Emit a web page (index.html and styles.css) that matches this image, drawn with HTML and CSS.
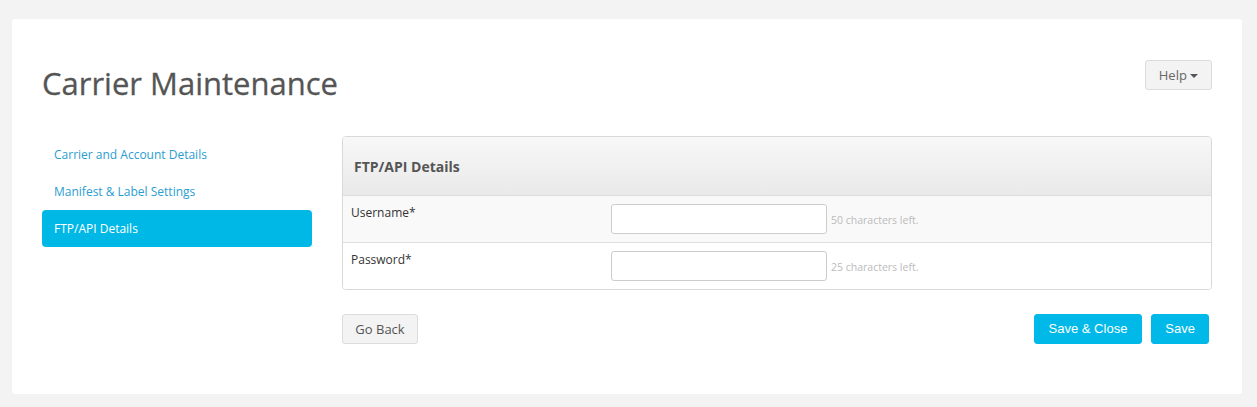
FILE: index.html
```html
<!DOCTYPE html>
<html>
<head>
<meta charset="utf-8">
<link rel="stylesheet" href="styles.css">
</head>
<body>
<div class="card">
  <div class="top">
    <h1 class="title">Carrier Maintenance</h1>
    <button class="btn btn-default help">Help <span class="caret"></span></button>
  </div>
  <div class="main">
    <ul class="side">
      <li><a>Carrier and Account Details</a></li>
      <li><a>Manifest &amp; Label Settings</a></li>
      <li class="active"><a>FTP/API Details</a></li>
    </ul>
    <div class="content">
      <div class="panel">
        <div class="panel-head">FTP/API Details</div>
        <div class="row odd">
          <div class="label">Username*</div>
          <div class="field"><input type="text" class="input"><span class="hint">50 characters left.</span></div>
        </div>
        <div class="row">
          <div class="label">Password*</div>
          <div class="field"><input type="password" class="input"><span class="hint">25 characters left.</span></div>
        </div>
      </div>
      <div class="actions">
        <button class="btn btn-default back">Go Back</button>
        <div class="right">
          <button class="btn btn-primary wide">Save &amp; Close</button>
          <button class="btn btn-primary">Save</button>
        </div>
      </div>
    </div>
  </div>
</div>
</body>
</html>
```
FILE: styles.css
```css
* { box-sizing: border-box; }
body {
  margin: 0;
  background: #f3f3f3;
  font-family: "Open Sans", sans-serif;
  padding: 19px 15px 13px 12px;
}
.card {
  background: #fff;
  border-radius: 3px;
  padding: 40px 30px 50px 30px;
  height: 375px;
}
.top {
  display: flex;
  justify-content: space-between;
  align-items: flex-start;
  height: 77px;
}
.title {
  margin: 0;
  padding-top: 4px;
  font-size: 31px;
  font-weight: 400;
  color: #555;
  line-height: 40px;
  -webkit-text-stroke: 0.3px #555;
}
.btn {
  font-family: "Open Sans", sans-serif;
  font-size: 13px;
  height: 30px;
  border-radius: 3px;
  cursor: pointer;
  padding: 0 13px;
  line-height: 28px;
}
.btn-default {
  background: #f3f3f3;
  border: 1px solid #dcdcdc;
  color: #555;
}
.back { width: 76px; padding: 0; }
.help {
  margin-top: 1px;
  width: 67px;
  padding: 0 10px;
  color: #666;
}
.caret {
  display: inline-block;
  width: 0;
  height: 0;
  border-left: 4px solid transparent;
  border-right: 4px solid transparent;
  border-top: 4px solid #555;
  vertical-align: middle;
  position: relative;
  top: -1px;
}
.main {
  display: flex;
  gap: 30px;
}
.side {
  list-style: none;
  margin: 0;
  padding: 0;
  width: 270px;
  flex: none;
}
.side li a {
  display: block;
  height: 37px;
  line-height: 37px;
  padding: 0 12px;
  font-size: 12px;
  color: #2a9dd0;
  border-radius: 4px;
}
.side li.active a {
  background: #00b8e6;
  color: #fff;
}
.content { flex: 1; }
.panel {
  border: 1px solid #d9d9d9;
  border-radius: 4px;
  overflow: hidden;
}
.panel-head {
  height: 59px;
  line-height: 60px;
  padding: 0 11px;
  font-weight: 700;
  font-size: 14px;
  color: #555;
  background: linear-gradient(#f8f8f8, #e9e9e9);
  border-bottom: 1px solid #dcdcdc;
}
.row {
  display: flex;
  height: 46px;
  background: #fff;
}
.row.odd {
  height: 47px;
  background: #f9f9f9;
  border-bottom: 1px solid #dedede;
}
.label {
  width: 268px;
  padding: 8px 0 0 8px;
  font-size: 12px;
  color: #333;
}
.field {
  display: flex;
  align-items: center;
}
.input {
  width: 216px;
  height: 30px;
  border: 1px solid #ccc;
  border-radius: 3px;
  background: #fff;
}
.hint {
  margin-left: 4px;
  font-size: 10.5px;
  color: #bbb;
  padding-top: 2px;
}
.actions {
  display: flex;
  justify-content: space-between;
  margin-top: 24px;
}
.right { display: flex; gap: 9px; padding-right: 3px; }
.btn-primary {
  background: #00b9e8;
  border: 1px solid #00b9e8;
  color: #fff;
  font-family: "Liberation Sans", Arial, sans-serif;
}
.wide { padding: 0 14px; }
```
